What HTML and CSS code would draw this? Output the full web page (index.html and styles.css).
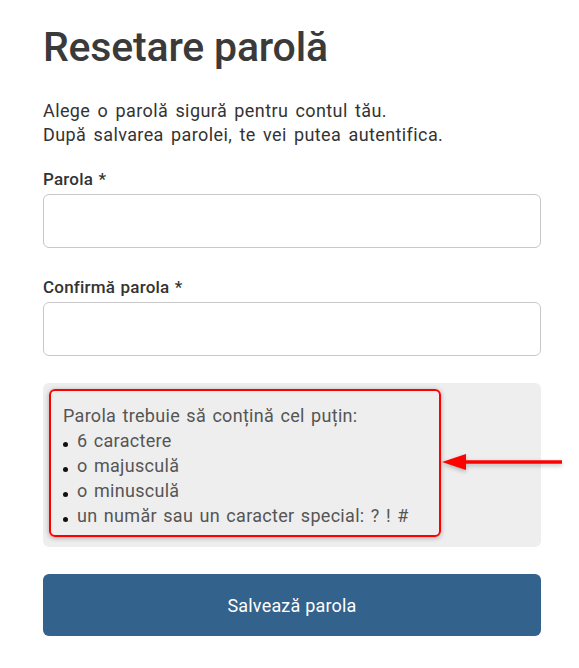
FILE: index.html
```html
<!DOCTYPE html>
<html lang="ro">
<head>
    <meta charset="UTF-8">
    <meta name="viewport" content="width=device-width, initial-scale=1.0">
    <title>Resetare parolă</title>
    <link rel="stylesheet" href="styles.css">
</head>
<body>
    <main class="page">
        <h1 class="title">Resetare parolă</h1>
        <p class="intro">Alege o parolă sigură pentru contul tău.<br>După salvarea parolei, te vei putea autentifica.</p>

        <form class="form">
            <label class="label" for="password">Parola *</label>
            <input class="field" type="password" id="password">

            <label class="label" for="confirm">Confirmă parola *</label>
            <input class="field" type="password" id="confirm">

            <div class="rules">
                <div class="highlight">
                    <div class="rules-title">Parola trebuie să conțină cel puțin:</div>
                    <ul class="rules-list">
                        <li>6 caractere</li>
                        <li>o majusculă</li>
                        <li>o minusculă</li>
                        <li>un număr sau un caracter special: ? ! #</li>
                    </ul>
                </div>
                <svg class="arrow" width="122" height="20" viewBox="0 0 122 20">
                    <line x1="20" y1="10" x2="120" y2="10" stroke="#f00" stroke-width="3.5"/>
                    <polygon points="0,10 24,2 24,18" fill="#f00"/>
                </svg>
            </div>

            <button class="save" type="button">Salvează parola</button>
        </form>
    </main>
</body>
</html>
```

FILE: styles.css
```css
body {
    margin: 0;
    background: #fff;
    font-family: Roboto, "Noto Sans", sans-serif;
    color: #333;
}

.page {
    width: 498px;
    margin-left: 43px;
    padding-top: 22px;
}

.title {
    margin: 0;
    font-size: 41px;
    font-weight: 500;
    line-height: 50px;
    letter-spacing: -0.2px;
    color: #3a3a3a;
}

.intro {
    margin: 27px 0 0;
    font-size: 18px;
    line-height: 24px;
    letter-spacing: 0.4px;
    word-spacing: 2.4px;
    color: #333;
}

.form {
    display: flex;
    flex-direction: column;
    margin-top: 20px;
}

.label {
    font-size: 17px;
    font-weight: 500;
    line-height: 24px;
    letter-spacing: 0.2px;
    word-spacing: 1px;
    color: #333;
    margin-bottom: 3px;
}

.field {
    box-sizing: border-box;
    height: 54px;
    border: 1px solid #c8c8c8;
    border-radius: 6px;
    background: #fff;
    margin-bottom: 27px;
}

.rules {
    position: relative;
    background: #eee;
    border-radius: 6px;
    padding: 6px;
    height: 164px;
    box-sizing: border-box;
}

.highlight {
    width: 392px;
    height: 148px;
    box-sizing: border-box;
    border: 2px solid #f00;
    border-radius: 6px;
    box-shadow: 0 1px 5px rgba(0, 0, 0, 0.3);
    padding: 12px 12px 0 12px;
    font-size: 18px;
    line-height: 25px;
    letter-spacing: 0.3px;
    word-spacing: 1.6px;
    color: #555;
}

.rules-list {
    list-style: none;
    margin: 0;
    padding: 0;
}

.rules-list li::before {
    content: "";
    display: inline-block;
    width: 5px;
    height: 5px;
    border-radius: 50%;
    background: #111;
    margin-right: 9px;
}

.arrow {
    position: absolute;
    left: 399px;
    top: 69px;
    filter: drop-shadow(0 2px 2px rgba(0, 0, 0, 0.25));
}

.save {
    height: 62px;
    margin-top: 27px;
    border: none;
    border-radius: 6px;
    background: #33628c;
    color: #fff;
    font-family: Roboto, "Noto Sans", sans-serif;
    font-size: 18px;
    letter-spacing: 0.2px;
}
```
